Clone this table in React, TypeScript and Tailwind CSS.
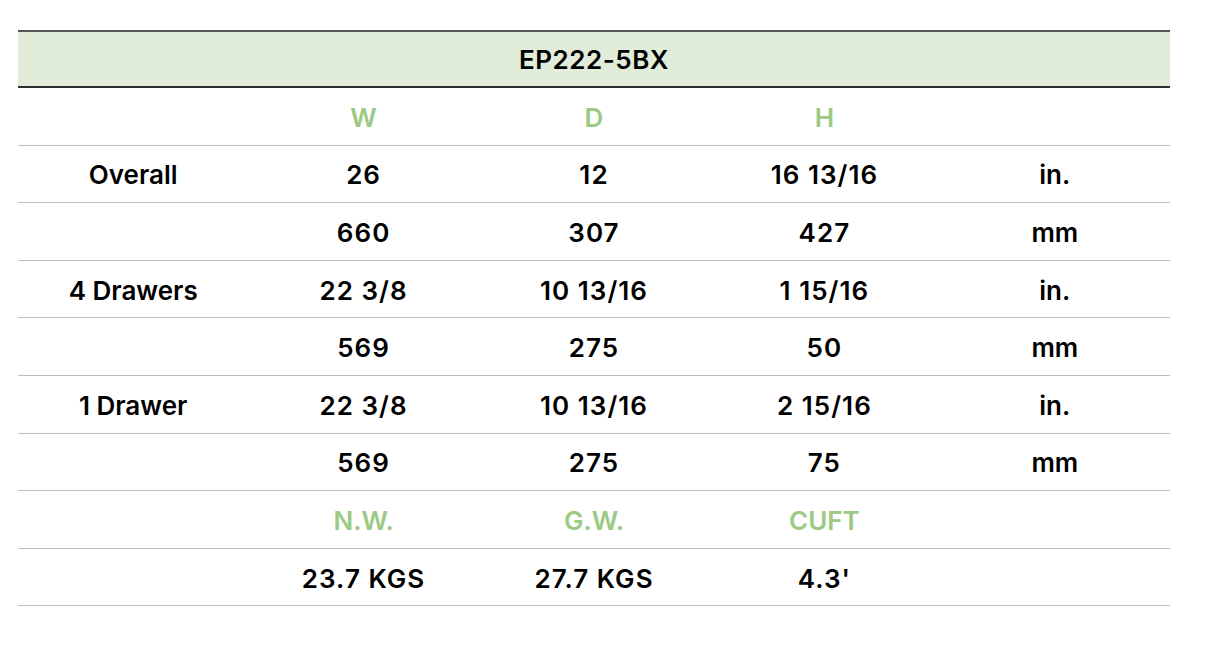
import React from 'react';

type Row = { cells: string[]; accent?: boolean };

const rows: Row[] = [
  { cells: ['', 'W', 'D', 'H', ''], accent: true },
  { cells: ['Overall', '26', '12', '16 13/16', 'in.'] },
  { cells: ['', '660', '307', '427', 'mm'] },
  { cells: ['4 Drawers', '22 3/8', '10 13/16', '1 15/16', 'in.'] },
  { cells: ['', '569', '275', '50', 'mm'] },
  { cells: ['1 Drawer', '22 3/8', '10 13/16', '2 15/16', 'in.'] },
  { cells: ['', '569', '275', '75', 'mm'] },
  { cells: ['', 'N.W.', 'G.W.', 'CUFT', ''], accent: true },
  { cells: ['', '23.7 KGS', '27.7 KGS', "4.3'", ''] },
];

const App = () => {
  return (
    <div className="min-h-screen bg-white pt-[30px] px-[18px] font-['Inter',sans-serif] text-[26px] font-semibold text-black">
      <div className="w-[1152px]">
        <div className="flex h-[58px] items-center justify-center border-y-2 border-t-[#555] border-b-[#2e2e2e] bg-[#e2edd9] tracking-[0.02em]">
          EP222-5BX
        </div>
        {rows.map((row, i) => (
          <div key={i} className="grid h-[57.6px] grid-cols-5 items-center border-b border-[#bdbdbd] pt-[2px]">
            {row.cells.map((c, j) => (
              <div
                key={j}
                className={
                  row.accent
                    ? 'text-center text-[#9cc983]'
                    : j > 0 && j < 4
                      ? 'text-center tracking-[0.04em]'
                      : 'text-center'
                }
              >
                {c}
              </div>
            ))}
          </div>
        ))}
      </div>
    </div>
  );
};

export default App;
